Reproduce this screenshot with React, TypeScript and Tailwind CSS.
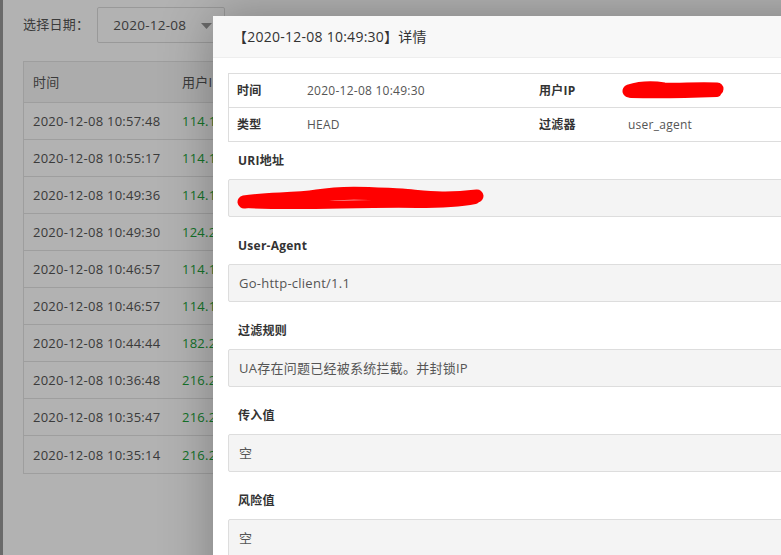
import React from "react";

const rows = [
  ["2020-12-08 10:57:48", "114.119.116.85"],
  ["2020-12-08 10:55:17", "114.119.135.22"],
  ["2020-12-08 10:49:36", "114.119.140.96"],
  ["2020-12-08 10:49:30", "124.223.10.4"],
  ["2020-12-08 10:46:57", "114.119.155.3"],
  ["2020-12-08 10:46:57", "114.119.155.3"],
  ["2020-12-08 10:44:44", "182.254.13.21"],
  ["2020-12-08 10:36:48", "216.244.66.20"],
  ["2020-12-08 10:35:47", "216.244.66.20"],
  ["2020-12-08 10:35:14", "216.244.66.20"],
];

const font = { fontFamily: '"Open Sans", "Noto Sans CJK SC", sans-serif' };

function Section({ label, children }: { label: string; children: React.ReactNode }) {
  return (
    <div className="mb-[10px]">
      <div className="h-[37px] flex items-center pl-[10px] text-[12px] leading-[16px] font-bold text-[#333]">{label}</div>
      <div className="h-[38px] flex items-center pl-[10px] bg-[#f4f4f4] border border-[#dddddd] rounded-[2px] text-[13px] leading-[18px] text-[#555] relative">
        {children}
      </div>
    </div>
  );
}

export default function App() {
  return (
    <div className="relative w-[781px] h-[555px] overflow-hidden bg-white tracking-[0.25px]" style={font}>
      {/* background page */}
      <div className="flex h-full">
        <div className="w-[3px] bg-[#999] shrink-0" />
        <div className="flex-1 pl-[20px] pt-[7px]">
          <div className="flex items-center h-[36px]">
            <span className="text-[13px] text-[#555]">选择日期：</span>
            <div className="ml-[8px] w-[128px] h-[36px] border border-[#dcdcdc] rounded-[2px] flex items-center pl-[15px] text-[13.5px] text-[#555] relative">
              2020-12-08
              <svg className="absolute left-[103px] top-[15px]" width="11" height="6" viewBox="0 0 11 6">
                <path d="M0 0 L11 0 L5.5 6 Z" fill="#999" />
              </svg>
            </div>
          </div>
          <div className="mt-[18px] w-[740px] border border-[#e2e2e2] text-[13px] leading-[18px]">
            <div className="flex h-[41px] items-center bg-[#f6f6f6] border-b border-[#e2e2e2] text-[#555]">
              <div className="w-[149px] pl-[9px]">时间</div>
              <div className="w-[40px] pl-[9px] whitespace-nowrap overflow-hidden">用户IP</div>
            </div>
            {rows.map((r, i) => (
              <div key={i} className={`flex h-[37px] items-center ${i < rows.length - 1 ? "border-b border-[#e2e2e2]" : ""}`}>
                <div className="w-[149px] pl-[9px] text-[#555] whitespace-nowrap">{r[0]}</div>
                <div className="w-[40px] pl-[9px] text-[#20a53a] whitespace-nowrap overflow-hidden">{r[1]}</div>
              </div>
            ))}
          </div>
        </div>
      </div>

      {/* overlay */}
      <div className="absolute inset-0 bg-black/30" />

      {/* modal */}
      <div className="absolute left-[213px] top-[16px] w-[700px] h-[600px] bg-white shadow-[1px_1px_50px_rgba(0,0,0,0.3)]">
        <div className="h-[42px] bg-[#f8f8f8] border-b border-[#eeeeee] flex items-center pl-[20px] text-[14px] text-[#333]">
          【2020-12-08 10:49:30】详情
        </div>
        <div className="p-[15px]">
          <div className="border border-[#dddddd] text-[12px] leading-[16px]">
            <div className="flex h-[34px] items-center border-b border-[#dddddd]">
              <div className="w-[69px] pl-[8px] font-bold text-[#333]">时间</div>
              <div className="w-[232px] pl-[9px] text-[#555]">2020-12-08 10:49:30</div>
              <div className="w-[89px] pl-[9px] font-bold text-[#333]">用户IP</div>
              <div className="flex-1 pl-[9px] relative h-full">
                <svg className="absolute left-[3px] top-[5px]" width="104" height="24" viewBox="0 0 104 24">
                  <path d="M7 12 C 20 8, 30 8, 42 10 C 58 11, 72 9, 95 10" stroke="#ff0000" strokeWidth="13" strokeLinecap="round" fill="none" />
                  <path d="M9 15 C 40 16, 70 15, 95 14" stroke="#ff0000" strokeWidth="8" strokeLinecap="round" fill="none" />
                </svg>
              </div>
            </div>
            <div className="flex h-[33px] items-center">
              <div className="w-[69px] pl-[8px] font-bold text-[#333]">类型</div>
              <div className="w-[232px] pl-[9px] text-[#555]">HEAD</div>
              <div className="w-[89px] pl-[9px] font-bold text-[#333]">过滤器</div>
              <div className="flex-1 pl-[9px] text-[#555]">user_agent</div>
            </div>
          </div>
          <Section label="URI地址">
            <svg className="absolute left-[8px] top-[5px]" width="248" height="28" viewBox="0 0 248 28">
              <path d="M7 17 C 30 13, 55 15, 80 11 C 110 6, 140 9, 165 10 C 190 12, 205 15, 240 11" stroke="#ff0000" strokeWidth="13" strokeLinecap="round" fill="none" />
              <path d="M8 19 C 60 22, 120 18, 180 19 C 210 19, 228 17, 238 15" stroke="#ff0000" strokeWidth="8" strokeLinecap="round" fill="none" />
            </svg>
          </Section>
          <Section label="User-Agent">Go-http-client/1.1</Section>
          <Section label="过滤规则">UA存在问题已经被系统拦截。并封锁IP</Section>
          <Section label="传入值">空</Section>
          <Section label="风险值">空</Section>
        </div>
      </div>
    </div>
  );
}
